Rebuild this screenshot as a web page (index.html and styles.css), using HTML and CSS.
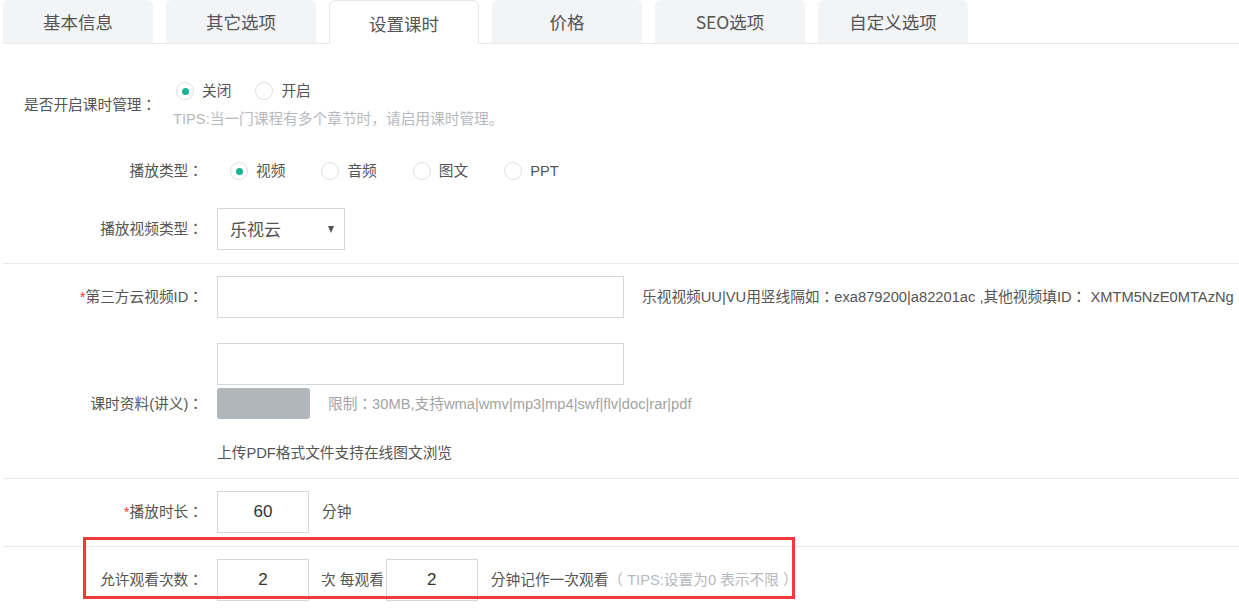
FILE: index.html
```html
<!DOCTYPE html>
<html lang="zh-CN">
<head>
<meta charset="utf-8">
<title>设置课时</title>
<link rel="stylesheet" href="styles.css">
</head>
<body>
<div class="page">
  <div class="tabs">
    <div class="tab">基本信息</div>
    <div class="tab">其它选项</div>
    <div class="tab active">设置课时</div>
    <div class="tab">价格</div>
    <div class="tab">SEO选项</div>
    <div class="tab">自定义选项</div>
  </div>

  <div class="section sec-a">
    <div class="row row-switch">
      <div class="label label-wide">是否开启课时管理：</div>
      <div class="stack">
        <div class="radios radios-tight">
          <span class="radio"><span class="dot on"></span>关闭</span>
          <span class="radio"><span class="dot"></span>开启</span>
        </div>
        <div class="tips">TIPS:当一门课程有多个章节时，请启用课时管理。</div>
      </div>
    </div>
    <div class="row row-type">
      <div class="label">播放类型：</div>
      <div class="radios radios-wide">
        <span class="radio"><span class="dot on"></span>视频</span>
        <span class="radio"><span class="dot"></span>音频</span>
        <span class="radio"><span class="dot"></span>图文</span>
        <span class="radio"><span class="dot"></span>PPT</span>
      </div>
    </div>
    <div class="row row-select">
      <div class="label">播放视频类型：</div>
      <div class="control">
        <div class="select"><span>乐视云</span><span class="caret"></span></div>
      </div>
    </div>
  </div>

  <div class="section sec-b">
    <div class="row">
      <div class="label"><span class="req">*</span>第三方云视频ID：</div>
      <div class="control">
        <div class="input wide"></div>
        <span class="help">乐视视频UU|VU用竖线隔如：exa879200|a82201ac ,其他视频填ID： XMTM5NzE0MTAzNg</span>
      </div>
    </div>
    <div class="row row-file-input">
      <div class="label"></div>
      <div class="control"><div class="input wide"></div></div>
    </div>
    <div class="row row-file-btn">
      <div class="label">课时资料(讲义)：</div>
      <div class="control">
        <div class="upload"></div>
        <span class="limit">限制：30MB,支持wma|wmv|mp3|mp4|swf|flv|doc|rar|pdf</span>
      </div>
    </div>
    <div class="row row-note">
      <div class="label"></div>
      <div class="control"><span class="note">上传PDF格式文件支持在线图文浏览</span></div>
    </div>
  </div>

  <div class="section sec-c">
    <div class="row">
      <div class="label"><span class="req">*</span>播放时长：</div>
      <div class="control">
        <div class="input small">60</div>
        <span class="unit">分钟</span>
      </div>
    </div>
  </div>

  <div class="section sec-d">
    <div class="row">
      <div class="label">允许观看次数：</div>
      <div class="control">
        <div class="input small">2</div>
        <span class="unit unit-times">次 每观看</span>
        <div class="input small input-after">2</div>
        <span class="unit">分钟记作一次观看<span class="tips-inline">（ TIPS:设置为0 表示不限 ）</span></span>
      </div>
    </div>
  </div>

  <div class="highlight"></div>
</div>
</body>
</html>
```

FILE: styles.css
```css
html, body {
  margin: 0;
  padding: 0;
  background: #ffffff;
  overflow: hidden;
}

body {
  font-family: "Liberation Sans", "Noto Sans CJK TC", "Noto Sans CJK SC", sans-serif;
  font-size: 14.7px;
  line-height: 20px;
  color: #555555;
  font-feature-settings: "locl" 0;
}

.page {
  position: relative;
  width: 1239px;
  height: 615px;
  padding-left: 3px;
  box-sizing: border-box;
}

/* Tabs */
.tabs {
  display: flex;
  gap: 13px;
  height: 43px;
  border-bottom: 1px solid #e8e9eb;
}

.tab {
  width: 150px;
  height: 43px;
  box-sizing: border-box;
  background: #f3f4f6;
  border-radius: 6px 6px 0 0;
  text-align: center;
  line-height: 43px;
  font-size: 17.5px;
  color: #555555;
  font-family: "Noto Sans CJK SC", "Liberation Sans", sans-serif;
  font-feature-settings: normal;
}

.tab.active {
  height: 44px;
  background: #ffffff;
  border: 1px solid #e6e7e9;
  border-bottom: none;
  line-height: 46px;
}

/* Sections */
.section {
  border-bottom: 1px solid #e8e9eb;
}

.sec-a { padding: 37px 0 13px; }
.sec-b { padding: 12px 0 15px; }
.sec-c { padding: 12px 0 13px; }
.sec-d { padding: 12px 0 0; border-bottom: none; }

.row {
  display: flex;
  align-items: center;
}

.label {
  width: 200px;
  margin-right: -3px;
  flex: none;
  text-align: right;
  white-space: nowrap;
}

.label-wide {
  width: 149px;
  margin-right: 0;
  padding-left: 21px;
  text-align: left;
}

.req {
  color: #ff3b3b;
}

.control {
  margin-left: 17px;
  display: flex;
  align-items: center;
  white-space: nowrap;
}

.stack {
  display: flex;
  flex-direction: column;
  gap: 8px;
}

/* Radios */
.radios {
  display: flex;
  align-items: center;
  height: 20px;
}

.radios-tight { padding-left: 3px; gap: 24px; }
.radios-wide { margin-left: 30px; gap: 36px; }

.row-type { margin-top: 32px; }
.row-select { margin-top: 27px; }

.radio {
  display: flex;
  align-items: center;
  gap: 8px;
  color: #555555;
}

.dot {
  width: 18px;
  height: 18px;
  box-sizing: border-box;
  border: 1px solid #dcdfe2;
  border-radius: 50%;
  background: #ffffff;
  display: flex;
  align-items: center;
  justify-content: center;
}

.dot.on::after {
  content: "";
  width: 7px;
  height: 7px;
  border-radius: 50%;
  background: #1ab394;
}

.tips {
  color: #b6babe;
  font-feature-settings: normal;
}

/* Select */
.select {
  width: 128px;
  height: 42px;
  box-sizing: border-box;
  border: 1px solid #d3d8dc;
  display: flex;
  align-items: center;
  justify-content: space-between;
  padding: 0 10px 0 12px;
  font-size: 17px;
  color: #555555;
  font-family: "Noto Sans CJK SC", sans-serif;
  font-feature-settings: normal;
}

.caret {
  width: 0;
  height: 0;
  border-left: 3.5px solid transparent;
  border-right: 3.5px solid transparent;
  border-top: 7px solid #555555;
  margin-top: 1px;
}

/* Inputs */
.input {
  height: 42px;
  box-sizing: border-box;
  border: 1px solid #d3d8dc;
  background: #ffffff;
  display: flex;
  align-items: center;
  justify-content: center;
  font-size: 17px;
  color: #333333;
}

.input.wide { width: 407px; }
.input.small { width: 92px; }
.input-after { margin-left: 2px; }

.help {
  margin-left: 18px;
  color: #555555;
}

.row-file-input { margin-top: 25px; }
.row-file-btn { margin-top: 3px; }
.row-note { margin-top: 24px; }

.upload {
  width: 93px;
  height: 31px;
  border-radius: 3px;
  background: #b1b6bb;
}

.limit {
  margin-left: 18px;
  color: #a3a3a3;
}

.note {
  color: #555555;
}

.unit {
  margin-left: 13px;
  color: #555555;
}

.unit-times {
  margin-left: 12px;
}

.tips-inline {
  color: #b6babe;
}

/* Annotation box */
.highlight {
  position: absolute;
  left: 83px;
  top: 537px;
  width: 712px;
  height: 62px;
  box-sizing: border-box;
  border: 3px solid #f33a3a;
}
```
